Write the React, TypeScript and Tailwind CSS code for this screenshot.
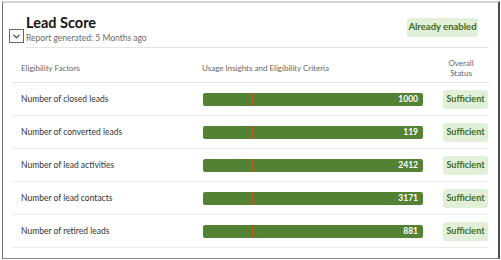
import { ChevronDown } from "lucide-react";

type Factor = {
  label: string;
  value: number;
};

const factors: Factor[] = [
  { label: "Number of closed leads", value: 1000 },
  { label: "Number of converted leads", value: 119 },
  { label: "Number of lead activities", value: 2412 },
  { label: "Number of lead contacts", value: 3171 },
  { label: "Number of retired leads", value: 881 },
];

function UsageBar({ value }: { value: number }) {
  return (
    <div className="relative h-[13px] w-[220px] rounded-[2px] bg-[#548235]">
      {/* 임계값 표시선 */}
      <div className="absolute left-[49px] top-0 h-full w-[2px] bg-[#c0571a]" />
      <span className="absolute right-[5px] top-0 text-[8.5px] font-bold leading-[13px] text-white">
        {value}
      </span>
    </div>
  );
}

export default function App() {
  return (
    <div
      className="h-[260px] w-[501px] bg-white pl-[2px] pt-[1px]"
      style={{ fontFamily: "Lato, 'Open Sans', sans-serif" }}
    >
      <div className="h-[258px] w-[498px] border-b border-l border-r-2 border-t-2 border-b-[#8a8a8a] border-l-[#6f6f6f] border-r-[#4a4a4a] border-t-[#d2d2d2]">
        {/* 제목 영역 */}
        <div className="flex h-[44px] items-start justify-between pr-[20px]">
          <div className="flex items-end pl-[6px]">
            <div className="mb-[1px] flex h-[14px] w-[15px] items-center justify-center border border-[#666] bg-white">
              <ChevronDown size={11} strokeWidth={2.2} className="text-[#333]" />
            </div>
            <div className="ml-[2px] pt-[12px]">
              <div className="text-[14.5px] font-bold leading-[16px] text-[#161513]">Lead Score</div>
              <div className="mt-[2px] text-[8.5px] leading-[11px] text-[#6b6b6b]">
                Report generated: 5 Months ago
              </div>
            </div>
          </div>
          <div className="mt-[15px] flex h-[19px] w-[71px] items-center justify-center rounded-[3px] bg-[#e2f0d9] text-[9.5px] font-bold text-[#3f6a23]">
            Already enabled
          </div>
        </div>

        <div className="ml-[23px] mr-[9px] border-b border-[#e4e4e4]" />

        {/* 표 */}
        <div className="ml-[9px] mr-[9px]">
          <div className="flex h-[35px] items-center border-b border-[#e4e4e4] pl-[9px] pt-[6px] text-[8px] text-[#666]">
            <div className="w-[181px]">Eligibility Factors</div>
            <div className="w-[235px]">Usage Insights and Eligibility Criteria</div>
            <div className="w-[48px] text-center leading-[10px]">
              Overall
              <br />
              Status
            </div>
          </div>

          {factors.map((f) => (
            <div
              key={f.label}
              className="flex h-[33px] items-center border-b border-[#ececec] pl-[9px]"
            >
              <div className="w-[182px] text-[8.5px] text-[#333]">{f.label}</div>
              <UsageBar value={f.value} />
              <div className="ml-[20px] flex h-[19px] w-[45px] items-center justify-center rounded-[3px] bg-[#e2f0d9] text-[9px] font-bold text-[#3f6a23]">
                Sufficient
              </div>
            </div>
          ))}
        </div>
      </div>
    </div>
  );
}
